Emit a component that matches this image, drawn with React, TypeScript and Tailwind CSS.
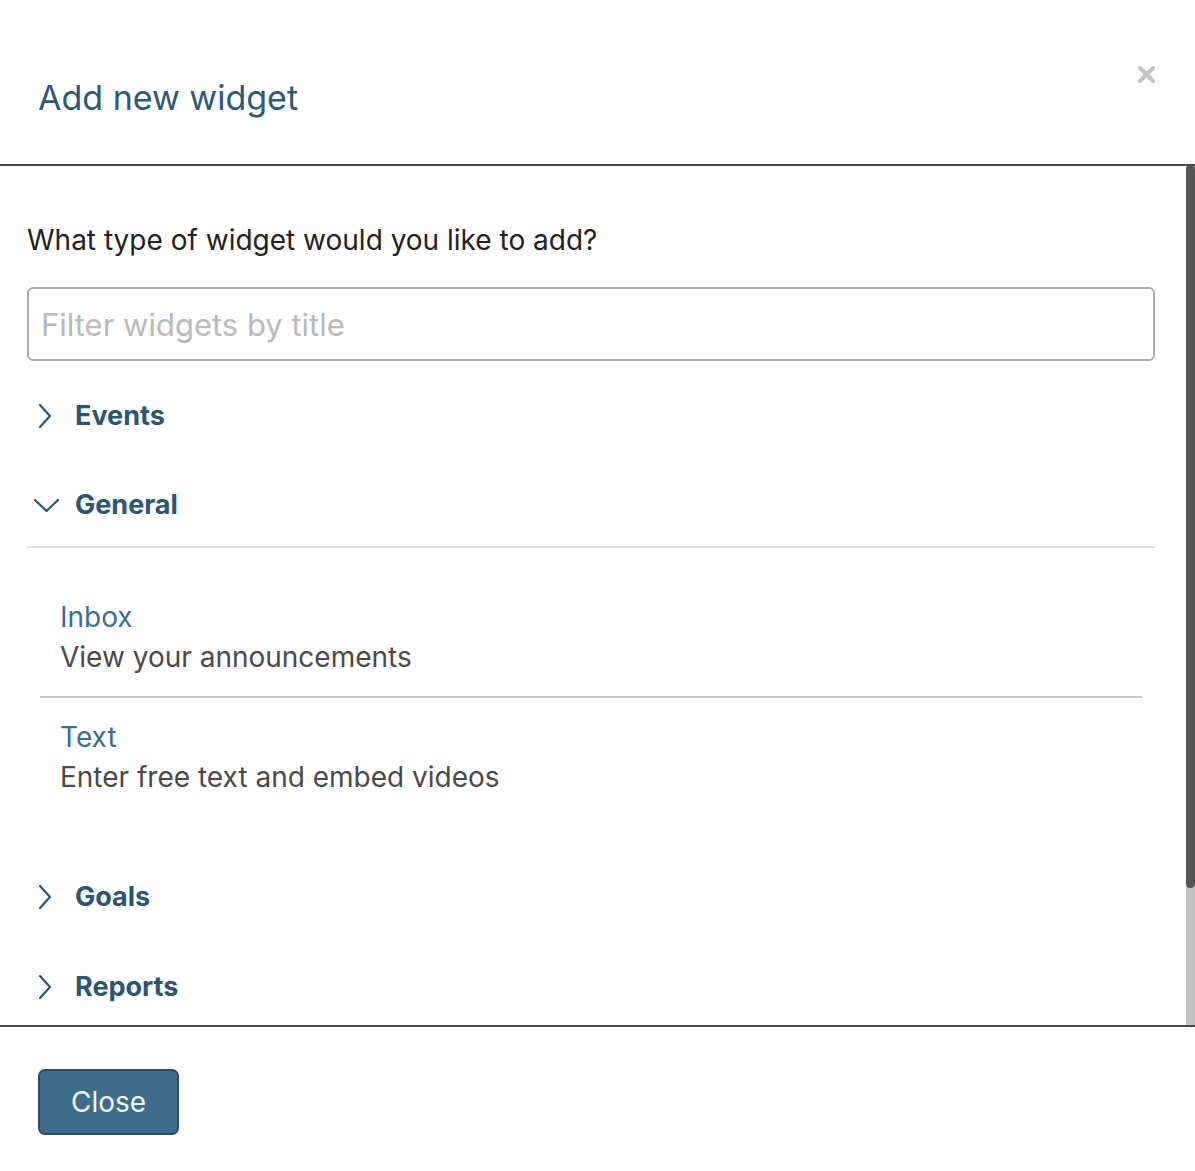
import { useState } from "react";

const font = { fontFamily: "Inter, 'Liberation Sans', sans-serif" };

function ChevronRight() {
  return (
    <svg width="14" height="26" viewBox="0 0 14 26" fill="none" className="shrink-0">
      <polyline points="2,2 12,13 2,24" stroke="#2b5670" strokeWidth="2.2" strokeLinecap="round" strokeLinejoin="round" />
    </svg>
  );
}

function ChevronDown() {
  return (
    <svg width="27" height="16" viewBox="0 0 27 16" fill="none" className="shrink-0">
      <polyline points="2,2 13.5,13 25,2" stroke="#2b5670" strokeWidth="2.2" strokeLinecap="round" strokeLinejoin="round" />
    </svg>
  );
}

function CloseX() {
  return (
    <svg width="19" height="19" viewBox="0 0 19 19" fill="none">
      <path d="M3 3 L16 16 M16 3 L3 16" stroke="#c2c2c2" strokeWidth="4" strokeLinecap="round" />
    </svg>
  );
}

const categories = [
  { name: "Events", items: [] },
  {
    name: "General",
    items: [
      { title: "Inbox", desc: "View your announcements" },
      { title: "Text", desc: "Enter free text and embed videos" },
    ],
  },
  { name: "Goals", items: [] },
  { name: "Reports", items: [] },
];

export default function App() {
  const [open, setOpen] = useState<string>("General");
  const [filter, setFilter] = useState("");

  return (
    <div className="flex flex-col h-[1171px] w-full bg-white" style={font}>
      {/* header */}
      <div className="flex justify-between items-start h-[166px] shrink-0 border-b-2 border-[#4a4a4a]">
        <h2 className="pl-[38px] pt-[77px] text-[34px] leading-[42px] text-[#2d5a75]">Add new widget</h2>
        <button className="mt-[65px] mr-[39px]">
          <CloseX />
        </button>
      </div>

      {/* body + scrollbar */}
      <div className="flex flex-1 min-h-0">
        <div className="flex-1 overflow-y-auto [scrollbar-width:none]">
          <div className="pl-[27px] pr-[30px] pt-[56px] pb-[160px]">
            <p className="text-[28px] leading-[36px] text-[#222222]">What type of widget would you like to add?</p>
            <input
              value={filter}
              onChange={(e) => setFilter(e.target.value)}
              placeholder="Filter widgets by title"
              className="mt-[29px] w-full h-[74px] rounded-[6px] border-2 border-[#ababab] px-[12px] text-[31px] text-[#333] placeholder:text-[#b9b9b9] outline-none"
            />
            <div className="mt-[10px]">
              {categories.map((c) => {
                const isOpen = open === c.name;
                return (
                  <div key={c.name}>
                    <button
                      onClick={() => setOpen(isOpen ? "" : c.name)}
                      className={`flex items-center w-full text-left ${isOpen ? "h-[87px] pt-[4px] border-b-2 border-[#dedede]" : "h-[90px]"}`}
                    >
                      <span className={`w-[48px] flex ${isOpen ? "pl-[6px]" : "pl-[11px]"}`}>
                        {isOpen ? <ChevronDown /> : <ChevronRight />}
                      </span>
                      <span className="text-[27px] font-bold text-[#2b5670]">{c.name}</span>
                    </button>
                    {isOpen && (
                      <div className="pt-[49px] pb-[55px] px-[13px]">
                        {c.items.map((it, i) => (
                          <div
                            key={it.title}
                            className={`pl-[20px] ${i === 0 ? "pb-[19px] border-b-2 border-[#c6c6c6]" : "pt-[19px]"}`}
                          >
                            <div className="text-[28px] leading-[40px] text-[#3b6f91]">{it.title}</div>
                            <div className="text-[28px] leading-[40px] text-[#4a4a4a]">{it.desc}</div>
                          </div>
                        ))}
                      </div>
                    )}
                  </div>
                );
              })}
            </div>
          </div>
        </div>
        <div className="w-[10px] shrink-0 bg-[#c1c1c1] border-l border-white">
          <div className="h-[722px] bg-[#555555] rounded-b-[5px] rounded-t-[3px]" />
        </div>
      </div>

      {/* footer */}
      <div className="h-[146px] shrink-0 border-t-2 border-[#4a4a4a] pl-[38px] pt-[42px]">
        <button className="w-[141px] h-[66px] rounded-[7px] bg-[#3d6d8a] border-2 border-[#2a4d63] text-[28px] text-[#f2f6f8]">
          Close
        </button>
      </div>
    </div>
  );
}
